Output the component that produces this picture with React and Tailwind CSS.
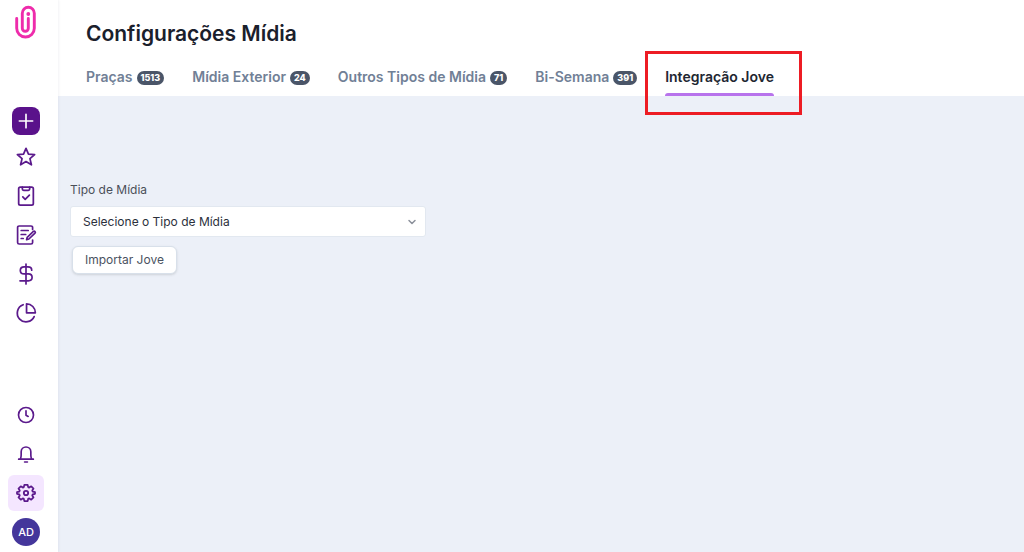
import { useState } from 'react';
import { ChevronDown } from 'lucide-react';

const TABS = [
  { id: 'pracas', label: 'Praças', count: 1513 },
  { id: 'exterior', label: 'Mídia Exterior', count: 24 },
  { id: 'outros', label: 'Outros Tipos de Mídia', count: 71 },
  { id: 'bisemana', label: 'Bi-Semana', count: 391 },
  { id: 'jove', label: 'Integração Jove', highlight: true },
];

const Icon = ({ children, className = 'size-6' }) => (
  <svg
    viewBox="0 0 24 24"
    fill="none"
    stroke="currentColor"
    strokeWidth="1.7"
    strokeLinecap="round"
    strokeLinejoin="round"
    aria-hidden="true"
    className={className}
  >
    {children}
  </svg>
);

const Logo = () => (
  <svg viewBox="0 0 22 34" fill="none" stroke="#ee2cab" strokeWidth="2.9" strokeLinecap="round" aria-hidden="true" className="w-[22px] h-[34px]">
    <path d="M1.700 13.500v9.700a8.800 8.800 0 0 0 17.600 0V8.300a6 6 0 0 0-12 0v15a3 3 0 0 0 6 0V13.500" />
    <circle cx="13.300" cy="9" r="1.900" fill="#ee2cab" stroke="none" />
  </svg>
);

const StarIcon = () => (
  <Icon className="size-[22px]">
    <path d="M12 2.600l2.700 6.200 6.700.6-5.100 4.400 1.600 6.700L12 17l-5.900 3.500 1.600-6.700-5.100-4.400 6.700-.6z" strokeWidth="1.900" />
  </Icon>
);

const ClipboardIcon = () => (
  <Icon className="size-[22px]">
    <rect x="4" y="2.400" width="16" height="19.600" rx="1.800" strokeWidth="1.900" />
    <path d="M8 2.400v2c0 .9.600 1.400 1.400 1.400h5.200c.8 0 1.400-.5 1.400-1.400v-2M8.500 13l2.600 2.600 4.600-4.600" strokeWidth="1.900" />
  </Icon>
);

const NotesIcon = () => (
  <Icon>
    <path d="M18.600 6.400V4.600c0-1-.6-1.600-1.600-1.600H5.200c-1 0-1.600.6-1.600 1.600v14.800c0 1 .6 1.600 1.600 1.600H17c1 0 1.600-.6 1.600-1.600v-2.300M7.200 7.500h7M7.200 11.500h4.500M7.200 15.500h2" />
    <path d="M13.200 14.300l6.200-5.900c1.100-.9 2.600.7 1.600 1.700l-6.100 5.900-2.300.7z" />
  </Icon>
);

const DollarIcon = () => (
  <Icon>
    <path d="M12 2v20M17.700 8.200c0-2-1.500-3.300-3.700-3.300h-3.900C8 4.900 6.300 6.300 6.300 8.400s1.700 3.400 3.800 3.400h4.200c2.200 0 3.800 1.300 3.800 3.500s-1.600 3.500-3.800 3.500H6" />
  </Icon>
);

const PieIcon = () => (
  <Icon className="size-[22px]">
    <path d="M8.900 3a9.600 9.600 0 1 0 12 12.900" strokeWidth="1.900" />
    <path d="M12.600 2v9.800h9.600A9.700 9.700 0 0 0 12.600 2z" strokeWidth="1.900" />
  </Icon>
);

const ClockIcon = () => (
  <Icon className="size-5">
    <circle cx="12" cy="12" r="9" strokeWidth="2" />
    <path d="M12 7v5.200l2.600 1.500" strokeWidth="2" />
  </Icon>
);

const BellIcon = () => (
  <Icon className="size-5">
    <path d="M3.200 18.200h17.600M5.200 18.200c.8-1.600 1-3 1-5V9.400a5.800 5.800 0 0 1 11.600 0v3.800c0 2 .2 3.400 1 5M10.300 21.600h3.400" strokeWidth="2" />
  </Icon>
);

const GearIcon = () => (
  <Icon className="size-5">
    <path
      d="M10 2.200h4l.6 2.700 1.300.6 2.400-1.500 2.700 2.700-1.500 2.400.6 1.300 2.700.6v2l-2.700.6-.6 1.300 1.500 2.400-2.700 2.700-2.400-1.500-1.300.6-.6 2.700h-4l-.6-2.700-1.300-.6L5.700 20 3 17.300l1.500-2.400-.6-1.300-2.700-.6v-2l2.700-.6.6-1.300L3 6.700 5.700 4l2.400 1.500 1.300-.6z"
      strokeWidth="2.100"
    />
    <circle cx="12" cy="12" r="2.600" strokeWidth="2.200" />
  </Icon>
);

const MAIN_ITEMS = [
  { label: 'Favoritos', Glyph: StarIcon },
  { label: 'Tarefas', Glyph: ClipboardIcon },
  { label: 'Propostas', Glyph: NotesIcon },
  { label: 'Financeiro', Glyph: DollarIcon },
  { label: 'Relatórios', Glyph: PieIcon },
];

const FOOTER_ITEMS = [
  { label: 'Histórico', Glyph: ClockIcon },
  { label: 'Notificações', Glyph: BellIcon },
  { label: 'Configurações', Glyph: GearIcon, active: true },
];

const NavButton = ({ label, Glyph, active }) => (
  <button
    type="button"
    aria-label={label}
    className={`size-9 flex items-center justify-center rounded-md text-[#5b1a8c] ${active ? 'bg-[#f4e6ff]' : ''}`}
  >
    <Glyph />
  </button>
);

const Sidebar = () => (
  <aside className="relative w-[58px] shrink-0 bg-white flex flex-col items-center pr-1.5 pt-1 pb-1.5 shadow-[0_0_3px_rgba(30,41,80,0.10)]">
    <a href="#" aria-label="Início" className="pt-px">
      <Logo />
    </a>
    <button
      type="button"
      aria-label="Adicionar"
      className="mt-17 mb-1 size-7 shrink-0 flex items-center justify-center rounded-lg bg-[#5a128b] text-white"
    >
      <Icon className="size-5">
        <path d="M12 4v16M4 12h16" strokeWidth="2" />
      </Icon>
    </button>
    <nav className="flex flex-col gap-[3px]">
      {MAIN_ITEMS.map((item) => (
        <NavButton key={item.label} {...item} />
      ))}
    </nav>
    <div className="mt-auto flex flex-col items-center gap-[3px]">
      {FOOTER_ITEMS.map((item) => (
        <NavButton key={item.label} {...item} />
      ))}
      <button type="button" className="mt-1 size-7 rounded-full bg-[#44369b] text-[11px] font-medium text-white">
        AD
      </button>
    </div>
  </aside>
);

const Tab = ({ tab, active, onSelect }) => (
  <button
    type="button"
    role="tab"
    aria-selected={active}
    onClick={onSelect}
    className={`relative h-10 pt-px flex items-center gap-1 whitespace-nowrap text-sm font-semibold ${active ? 'text-[#212631]' : 'text-[#718096]'}`}
  >
    {tab.label}
    {tab.count && (
      <span className="mt-0.5 rounded-full bg-[#4a5568] px-1 text-[9px] leading-[14px] font-extrabold text-white">
        {tab.count}
      </span>
    )}
    {active && <span className="absolute inset-x-0 bottom-0 h-[3px] rounded-t-sm bg-[#b873ec]" />}
    {tab.highlight && (
      <span className="absolute -left-5 -right-7 -top-[5px] -bottom-[19px] border-3 border-[#ed1c24] pointer-events-none" />
    )}
  </button>
);

const App = () => {
  const [activeTab, setActiveTab] = useState('jove');
  const [mediaType, setMediaType] = useState('');

  return (
    <div className="min-h-screen flex bg-[#ecf0f8] font-['Inter',sans-serif]">
      <Sidebar />
      <main className="flex-1 min-w-0">
        <header className="bg-white pl-7 pt-5">
          <h1 className="text-[21px] leading-7 font-semibold text-[#1a202c]">Configurações Mídia</h1>
          <div role="tablist" className="mt-2 flex gap-7">
            {TABS.map((tab) => (
              <Tab key={tab.id} tab={tab} active={activeTab === tab.id} onSelect={() => setActiveTab(tab.id)} />
            ))}
          </div>
        </header>

        <form className="px-3 pt-21" onSubmit={(e) => e.preventDefault()}>
          <label htmlFor="media-type" className="block text-xs leading-5 text-[#4a4f59]">
            Tipo de Mídia
          </label>
          <div className="relative mt-1.5 w-full max-w-[356px]">
            <select
              id="media-type"
              value={mediaType}
              onChange={(e) => setMediaType(e.target.value)}
              className="w-full h-[31px] appearance-none rounded-[3px] border border-[#e2e8f0] bg-white pl-3 pr-8 text-xs text-[#2b303b] outline-none"
            >
              <option value="">Selecione o Tipo de Mídia</option>
              <option value="outdoor">Outdoor</option>
              <option value="painel">Painel</option>
            </select>
            <ChevronDown className="absolute right-2 top-2.5 size-3 text-[#8c919b] pointer-events-none" strokeWidth={3} />
          </div>
          <button
            type="submit"
            className="mt-[9px] ml-0.5 h-7 rounded-md border border-[#d8e0ea] bg-white px-3 text-xs text-[#4a5260] shadow-sm"
          >
            Importar Jove
          </button>
        </form>
      </main>
    </div>
  );
};

export default App;
